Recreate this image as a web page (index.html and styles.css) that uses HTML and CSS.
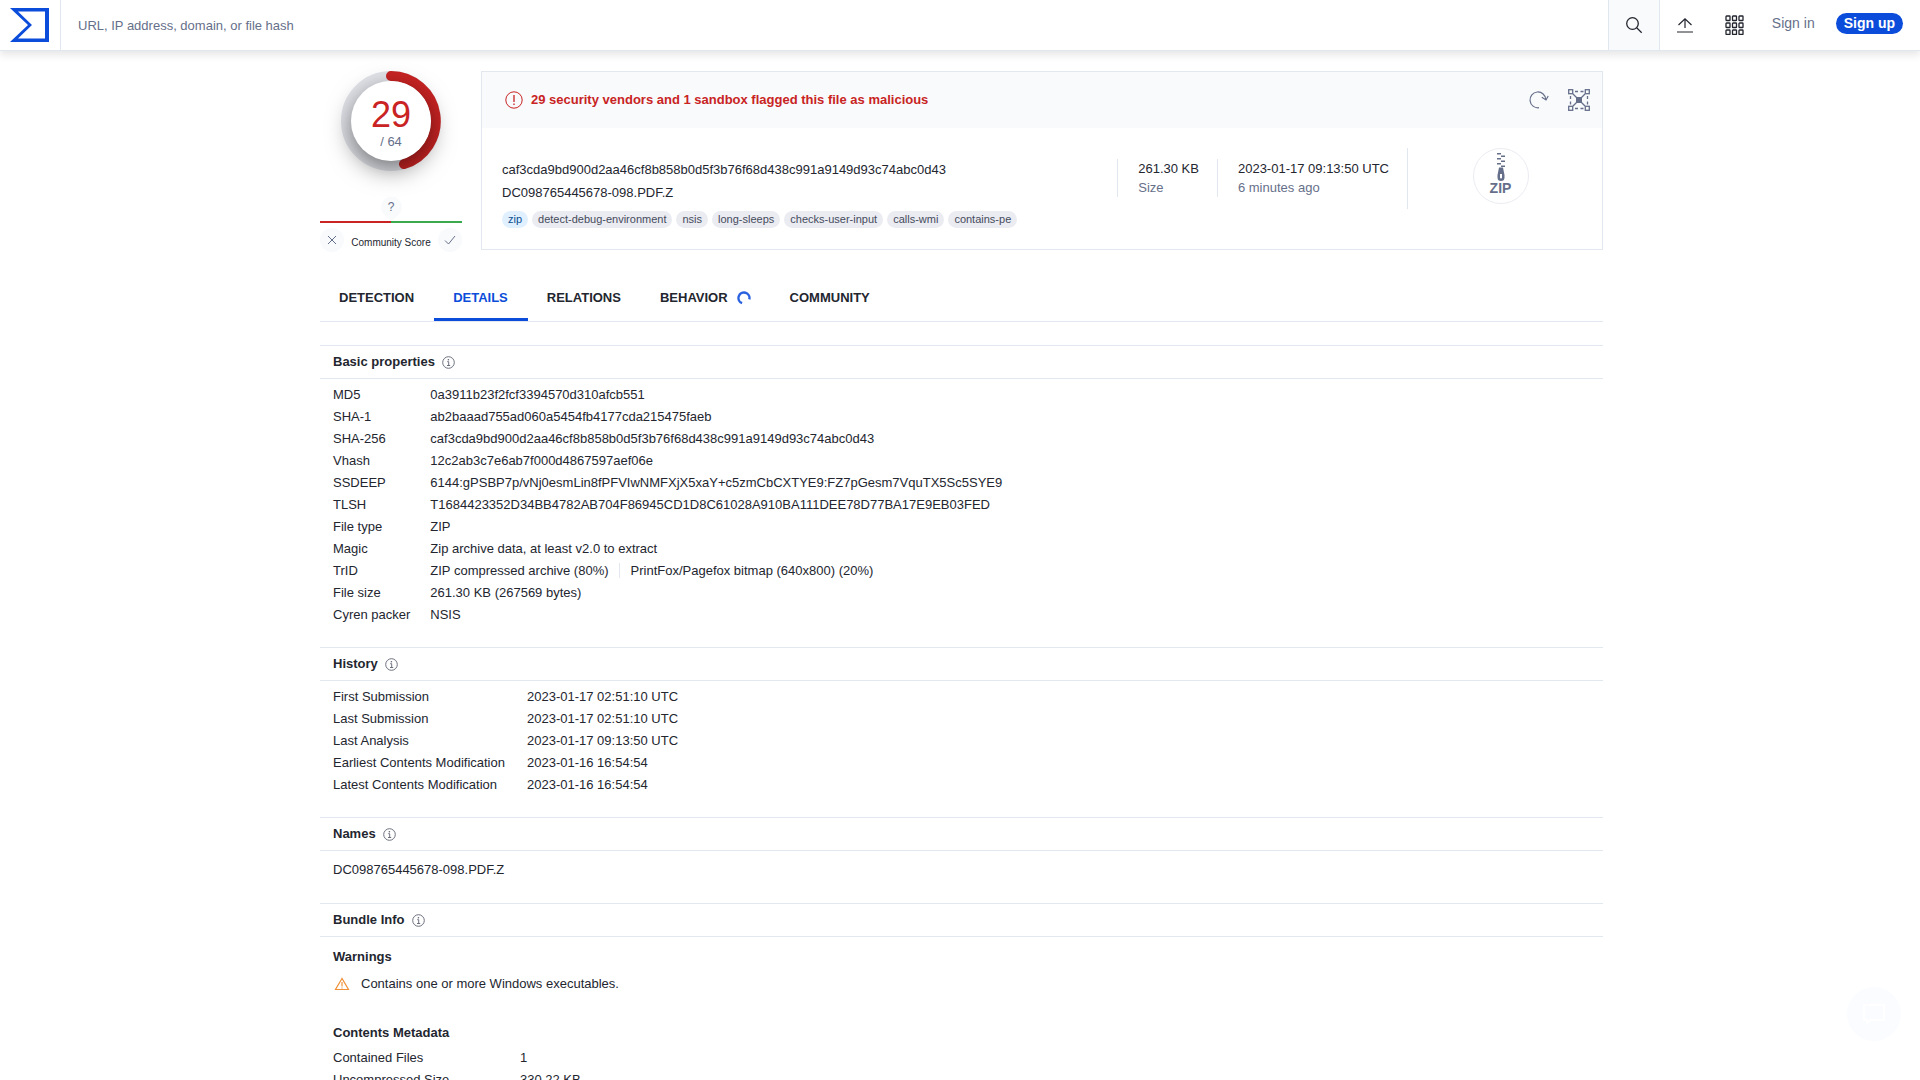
FILE: index.html
```html
<!DOCTYPE html>
<html lang="en">
<head>
<meta charset="utf-8">
<title>VirusTotal - File - DC098765445678-098.PDF.Z</title>
<link rel="stylesheet" href="styles.css">
</head>
<body>
<svg class="defs" aria-hidden="true">
  <symbol id="info" viewBox="0 0 13 13"><g fill="none" stroke="currentColor"><circle cx="6.500" cy="6.500" r="5.800" stroke-width=".9"/><path d="M5.200 5.700h1.500v3.800M5 9.500h3.200" stroke-width=".9"/></g><circle cx="6.400" cy="3.700" r=".8" fill="currentColor"/></symbol>
</svg>
<header class="topbar">
  <a class="logo" href="#" aria-label="Home">
    <svg width="39" height="34" viewBox="0 0 39 34"><path fill="#0b4dda" fill-rule="evenodd" d="M0 0h39v34H0l18-17zM8 3.500L22 17 8 30.500h27v-27z"/></svg>
  </a>
  <input class="search" type="text" aria-label="Search" placeholder="URL, IP address, domain, or file hash">
  <button class="search-btn" aria-label="Search">
    <svg width="18" height="18" viewBox="0 0 18 18" fill="none" stroke="currentColor" stroke-width="1.300"><circle cx="7.500" cy="7.500" r="5.800"/><path d="M11.700 11.700l5 5"/></svg>
  </button>
  <button class="icon-btn" aria-label="Upload">
    <svg width="16" height="16" viewBox="0 0 16 16" fill="none" stroke="currentColor" stroke-width="1.200"><path d="M8 11V2M1.500 8L8 1.800 14.500 8M0 15h16"/></svg>
  </button>
  <button class="icon-btn" aria-label="Apps">
    <svg width="19" height="20" viewBox="0 0 19 20" fill="none" stroke="currentColor" stroke-width="1.300"><g id="r"><rect x="1" y="1" width="4" height="4.500" rx=".6"/><rect x="7.500" y="1" width="4" height="4.500" rx=".6"/><rect x="14" y="1" width="4" height="4.500" rx=".6"/></g><use href="#r" y="7"/><use href="#r" y="14"/></svg>
  </button>
  <a class="signin" href="#">Sign in</a>
  <a class="signup" href="#">Sign up</a>
</header>

<main class="page">
  <section class="summary">
    <div class="score">
      <div class="gauge">
        <svg class="ring" width="100" height="100" viewBox="0 0 100 100" fill="none" stroke-width="10">
          <circle cx="50" cy="50" r="45" stroke="#e2e4ea"/>
          <path d="M50 5A45 45 0 0 1 63 93" stroke="#c92323" stroke-linecap="round"/>
        </svg>
        <div class="dial"><span class="hits">29</span><span class="total">/ 64</span></div>
      </div>
      <div class="pin">
        <svg width="21" height="24" viewBox="0 0 21 24"><path fill="#f8fafc" d="M10.500 24L3 17.500A10.500 10.500 0 1 1 18 17.500z"/></svg>
        <span>?</span>
      </div>
      <div class="scale"></div>
      <div class="votes">
        <button class="vote" aria-label="Vote malicious"><svg width="10" height="10" viewBox="0 0 10 10" fill="none" stroke="currentColor"><path d="M1 1l8 8M9 1L1 9"/></svg></button>
        <span>Community Score</span>
        <button class="vote" aria-label="Vote harmless"><svg width="12" height="10" viewBox="0 0 12 10" fill="none" stroke="currentColor"><path d="M1 5.500L4.500 9 11 1"/></svg></button>
      </div>
    </div>

    <div class="card">
      <div class="card-head">
        <svg class="alert" width="18" height="18" viewBox="0 0 18 18" fill="none" stroke="currentColor"><circle cx="9" cy="9" r="8.200"/><path d="M9 4v7M9 12.500v1.500" stroke-width="1.300"/></svg>
        <h1>29 security vendors and 1 sandbox flagged this file as malicious</h1>
        <button class="tool" aria-label="Reanalyze">
          <svg width="20" height="18" viewBox="0 0 20 18" fill="none" stroke="currentColor" stroke-width="1.200"><path d="M10 16.700A7.900 7.900 0 1 1 16.800 8.500"/><path d="M12.800 6.200l4.200 2.800 2.200-4"/></svg>
        </button>
        <button class="tool" aria-label="Graph">
          <svg width="22" height="22" viewBox="0 0 22 22" fill="none" stroke="currentColor" stroke-width="1.300"><rect x=".7" y=".7" width="4" height="4"/><rect x="17.300" y=".7" width="4" height="4"/><rect x=".7" y="17.300" width="4" height="4"/><rect x="17.300" y="17.300" width="4" height="4"/><path d="M5 5l12 12M17 5L5 17M7 2.500h3M12.500 2.500h3M7 19.500h3M12.500 19.500h3M2.500 7v3M2.500 12.500v3M19.500 7v3M19.500 12.500v3"/><rect x="8" y="8" width="6" height="6" fill="currentColor" stroke="none"/></svg>
        </button>
      </div>
      <div class="card-body">
        <div class="ident">
          <p>caf3cda9bd900d2aa46cf8b858b0d5f3b76f68d438c991a9149d93c74abc0d43</p>
          <p>DC098765445678-098.PDF.Z</p>
          <div class="tags">
            <a class="tag kind" href="#">zip</a>
            <a class="tag" href="#">detect-debug-environment</a>
            <a class="tag" href="#">nsis</a>
            <a class="tag" href="#">long-sleeps</a>
            <a class="tag" href="#">checks-user-input</a>
            <a class="tag" href="#">calls-wmi</a>
            <a class="tag" href="#">contains-pe</a>
          </div>
        </div>
        <div class="fact"><span>261.30 KB</span><span class="muted">Size</span></div>
        <div class="fact"><span>2023-01-17 09:13:50 UTC</span><span class="muted">6 minutes ago</span></div>
        <div class="kind-cell">
          <div class="badge">
            <svg width="10" height="28" viewBox="0 0 10 28" fill="#666f8a"><path d="M1 0h4v1.500H1zM5 2.500h4V4H5zM1 5h4v1.500H1zM5 7.500h4V9H5zM1 10h4v1.500H1zM5 12.500h4V14H5z"/><path fill-rule="evenodd" d="M3 14.500h4L8.500 22v2.500a3.500 3.500 0 0 1-7 0V22zM4 21v3.500a1 1 0 0 0 2 0V21z"/></svg>
            <span>ZIP</span>
          </div>
        </div>
      </div>
    </div>
  </section>

  <nav class="tabs">
    <a class="tab" href="#">DETECTION</a>
    <a class="tab active" href="#">DETAILS</a>
    <a class="tab" href="#">RELATIONS</a>
    <a class="tab" href="#">BEHAVIOR <svg width="14" height="14" viewBox="0 0 14 14" fill="none" stroke="#2b62e0" stroke-width="2.400"><path d="M5.100 12.200A5.500 5.500 0 1 1 12.300 8.400"/></svg></a>
    <a class="tab" href="#">COMMUNITY</a>
  </nav>

  <section class="block">
    <h2>Basic properties <svg width="13" height="13"><use href="#info"/></svg></h2>
    <table>
      <tr><th scope="row">MD5</th><td>0a3911b23f2fcf3394570d310afcb551</td></tr>
      <tr><th scope="row">SHA-1</th><td>ab2baaad755ad060a5454fb4177cda215475faeb</td></tr>
      <tr><th scope="row">SHA-256</th><td>caf3cda9bd900d2aa46cf8b858b0d5f3b76f68d438c991a9149d93c74abc0d43</td></tr>
      <tr><th scope="row">Vhash</th><td>12c2ab3c7e6ab7f000d4867597aef06e</td></tr>
      <tr><th scope="row">SSDEEP</th><td>6144:gPSBP7p/vNj0esmLin8fPFVIwNMFXjX5xaY+c5zmCbCXTYE9:FZ7pGesm7VquTX5Sc5SYE9</td></tr>
      <tr><th scope="row">TLSH</th><td>T1684423352D34BB4782AB704F86945CD1D8C61028A910BA111DEE78D77BA17E9EB03FED</td></tr>
      <tr><th scope="row">File type</th><td>ZIP</td></tr>
      <tr><th scope="row">Magic</th><td>Zip archive data, at least v2.0 to extract</td></tr>
      <tr><th scope="row">TrID</th><td><span>ZIP compressed archive (80%)</span><span class="alt">PrintFox/Pagefox bitmap (640x800) (20%)</span></td></tr>
      <tr><th scope="row">File size</th><td>261.30 KB (267569 bytes)</td></tr>
      <tr><th scope="row">Cyren packer</th><td>NSIS</td></tr>
    </table>
  </section>

  <section class="block">
    <h2>History <svg width="13" height="13"><use href="#info"/></svg></h2>
    <table class="history">
      <tr><th scope="row">First Submission</th><td>2023-01-17 02:51:10 UTC</td></tr>
      <tr><th scope="row">Last Submission</th><td>2023-01-17 02:51:10 UTC</td></tr>
      <tr><th scope="row">Last Analysis</th><td>2023-01-17 09:13:50 UTC</td></tr>
      <tr><th scope="row">Earliest Contents Modification</th><td>2023-01-16 16:54:54</td></tr>
      <tr><th scope="row">Latest Contents Modification</th><td>2023-01-16 16:54:54</td></tr>
    </table>
  </section>

  <section class="block">
    <h2>Names <svg width="13" height="13"><use href="#info"/></svg></h2>
    <p class="name">DC098765445678-098.PDF.Z</p>
  </section>

  <section class="block">
    <h2>Bundle Info <svg width="13" height="13"><use href="#info"/></svg></h2>
    <h3>Warnings</h3>
    <p class="warning"><svg width="16" height="14" viewBox="0 0 16 14" fill="none" stroke="#f0913a" stroke-width="1.200"><path d="M8 1.500L1.500 12.500h13zM8 5v4.500M8 10.500v1"/></svg>Contains one or more Windows executables.</p>
    <h3>Contents Metadata</h3>
    <table class="meta">
      <tr><th scope="row">Contained Files</th><td>1</td></tr>
      <tr><th scope="row">Uncompressed Size</th><td>330.22 KB</td></tr>
    </table>
  </section>
</main>

<button class="chat" aria-label="Chat">
  <svg width="24" height="22" viewBox="0 0 24 22" fill="none" stroke="#fff" stroke-width="2"><path d="M2 2h20v15H9l-4 3v-3H2z"/></svg>
</button>
</body>
</html>
```
FILE: styles.css
```css
* { box-sizing: border-box; }

body {
  margin: 0;
  height: 100vh;
  overflow: hidden;
  background: #fff;
  color: #23262f;
  font: 13px/22px "Liberation Sans", Arial, sans-serif;
}

h1, h2, h3, p { margin: 0; font-size: 13px; }
a { color: inherit; text-decoration: none; }
svg { display: block; flex: none; }
button { border: 0; padding: 0; background: none; color: inherit; font: inherit; }
.defs { display: none; }

/* top bar */
.topbar {
  display: flex;
  align-items: center;
  height: 51px;
  padding-right: 17px;
  border-bottom: 1px solid #e1e7ef;
  box-shadow: 0 4px 8px rgba(0, 0, 0, .1);
}
.logo {
  display: flex;
  align-items: center;
  align-self: stretch;
  width: 61px;
  padding-left: 10px;
  border-right: 1px solid #e1e7ef;
}
.search {
  flex: 1;
  height: 40px;
  padding: 0 17px;
  border: 0;
  outline: 0;
  background: none;
  font: inherit;
}
.search::placeholder { color: #666f8a; opacity: 1; }
.search-btn {
  display: grid;
  place-items: center;
  align-self: stretch;
  width: 52px;
  border: solid #e1e7ef;
  border-width: 0 1px;
  background: #f8fafc;
}
.icon-btn { display: grid; place-items: center; width: 50px; height: 50px; }
.signin { margin: 0 21px 4px 12px; color: #666f8a; font-size: 14px; }
.signup {
  margin-bottom: 4px;
  padding: 0 8px;
  border-radius: 11px;
  background: #0b4dda;
  color: #fff;
  font-size: 14px;
  font-weight: bold;
  line-height: 21px;
}

.page { max-width: 1286px; margin: 0 auto; padding: 20px 0 0 3px; }

/* summary */
.summary { display: flex; align-items: flex-start; gap: 19px; }
.score { width: 142px; display: flex; flex-direction: column; align-items: center; }
.gauge { display: grid; place-items: center; }
.gauge > * { grid-area: 1 / 1; }
.dial {
  display: flex;
  flex-direction: column;
  align-items: center;
  width: 80px;
  height: 80px;
  padding-top: 14px;
  border-radius: 50%;
  background: #fff;
  box-shadow: 0 8px 24px rgba(0, 0, 0, .5);
}
.hits { color: #c92323; font-size: 36px; line-height: 40px; }
.total { color: #666f8a; line-height: 14px; }
.pin { display: grid; justify-items: center; margin-top: 26px; color: #666f8a; font-size: 12px; line-height: 20px; }
.pin > * { grid-area: 1 / 1; }
.scale { align-self: stretch; height: 2px; background: linear-gradient(90deg, #c92323 50%, #3ba94e 50%); }
.votes { display: flex; justify-content: space-between; align-items: center; align-self: stretch; margin-top: 5px; font-size: 10px; line-height: 14px; }
.votes span { padding-top: 5px; }
.vote { display: grid; place-items: center; width: 24px; height: 24px; border-radius: 50%; background: #f8fafc; color: #666f8a; }

.card { flex: 1; border: 1px solid #e3e8f0; }
.card-head { display: flex; align-items: center; height: 56px; padding: 0 12px 0 23px; background: #f8fafc; color: #c92323; }
.card-head h1 { flex: 1; margin-left: 8px; }
.tool { margin-left: 19px; color: #666f8a; }
.card-body { display: flex; align-items: flex-start; padding: 20px 0 21px 20px; }
.ident { flex: 1; padding-top: 10px; line-height: 23px; }
.tags { display: flex; gap: 4px; margin-top: 7px; }
.tag { padding: 0 6px; border-radius: 9px; background: #ebecf2; color: #454b5c; font-size: 11px; line-height: 17px; }
.kind { background: #e1f0ff; color: #0b4f8f; }
.fact { display: flex; flex-direction: column; margin-top: 11px; padding: 0 18px 0 20px; border-left: 1px solid #e1e7ef; line-height: 19px; }
.muted { color: #666f8a; }
.kind-cell { display: flex; justify-content: center; width: 195px; height: 61px; padding-right: 9px; border-left: 1px solid #e1e7ef; }
.badge { display: flex; flex-direction: column; align-items: center; width: 56px; height: 56px; padding-top: 4px; border: 1px solid #ebecf2; border-radius: 50%; color: #666f8a; }
.badge span { font-size: 14px; font-weight: bold; line-height: 15px; }

/* tabs */
.tabs { display: flex; height: 47px; margin: 23px 0; border-bottom: 1px solid #e3e8f0; font-weight: bold; }
.tab { display: flex; align-items: center; gap: 9px; height: 46px; padding: 0 20px 0 19px; }
.active { color: #0b4dda; box-shadow: inset 0 -3px #0b4dda; }

/* detail blocks */
.block { padding-bottom: 21px; }
.block h2 { display: flex; align-items: center; gap: 7px; height: 34px; padding: 0 13px; border: solid #e3e8f0; border-width: 1px 0; }
.block h2 svg { color: #5d6270; }
.block table { margin: 5px 0 0 13px; border-spacing: 0; }
th, td { padding: 0; text-align: left; font-weight: normal; }
th { padding-right: 20px; }
.history th { width: 194px; }
.alt { margin-left: 10px; padding-left: 11px; border-left: 1px solid #e3e8f0; }
.name { padding: 8px 13px 1px; }
.block h3 { padding: 9px 13px 0; }
.warning { display: flex; align-items: center; gap: 11px; padding: 5px 14px 18px; }
.block .meta { margin-top: 3px; }
.meta th { width: 187px; }

.chat {
  position: fixed;
  right: 19px;
  bottom: 39px;
  display: grid;
  place-items: center;
  width: 54px;
  height: 54px;
  border-radius: 50%;
  background: #fafcff;
}
```
